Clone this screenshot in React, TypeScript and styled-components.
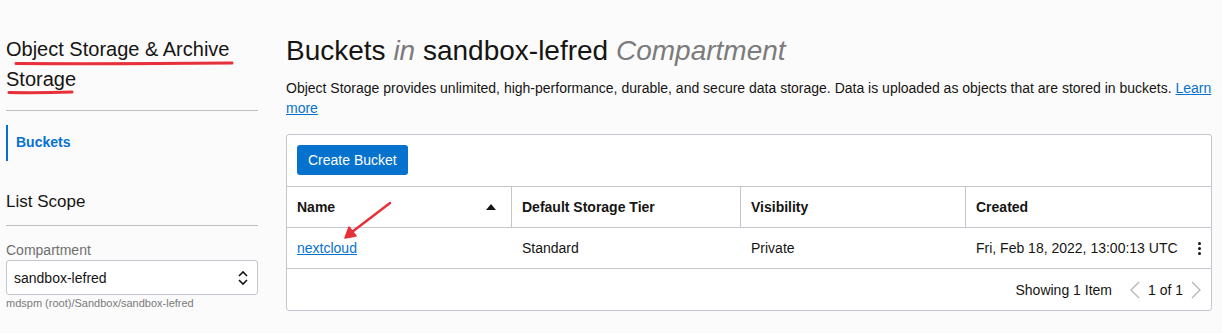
import styled, { createGlobalStyle } from "styled-components"

const GlobalStyle = createGlobalStyle`
    html, body {
        margin: 0;
        padding: 0;
        background: #fbfbfb;
        font-family: "Liberation Sans", Arial, sans-serif;
        color: #161513;
    }
`

const columns = [
    { label: "Name", width: 225, sort: true },
    { label: "Default Storage Tier", width: 229 },
    { label: "Visibility", width: 225 },
    { label: "Created", width: 0 },
]

export default function App() {
    return (
        <>
            <GlobalStyle />
            <Page>
                <Sidebar>
                    <SideTitle>Object Storage &amp; Archive Storage</SideTitle>
                    <Divider />
                    <NavItem>Buckets</NavItem>
                    <ScopeTitle>List Scope</ScopeTitle>
                    <Divider />
                    <FieldLabel>Compartment</FieldLabel>
                    <Select>
                        <span>sandbox-lefred</span>
                        <svg width="12" height="16" viewBox="0 0 12 16">
                            <path d="M2 6 L6 2 L10 6 M2 10 L6 14 L10 10" fill="none" stroke="#161513" strokeWidth="1.6" />
                        </svg>
                    </Select>
                    <Hint>mdspm (root)/Sandbox/sandbox-lefred</Hint>
                </Sidebar>
                <Main>
                    <Title>
                        Buckets <Muted>in</Muted> sandbox-lefred <Muted>Compartment</Muted>
                    </Title>
                    <Description>
                        Object Storage provides unlimited, high-performance, durable, and secure data storage. Data is uploaded as objects that are stored in buckets. <Link>Learn</Link> <Link>more</Link>
                    </Description>
                    <Card>
                        <Toolbar>
                            <PrimaryButton>Create Bucket</PrimaryButton>
                        </Toolbar>
                        <HeaderRow>
                            {columns.map((c, i) => (
                                <HeadCell key={c.label} $width={c.width} $last={i === columns.length - 1}>
                                    {c.label}
                                    {c.sort && <SortArrow />}
                                </HeadCell>
                            ))}
                        </HeaderRow>
                        <BodyRow>
                            <Cell $width={225}><Link>nextcloud</Link></Cell>
                            <Cell $width={229}>Standard</Cell>
                            <Cell $width={225}>Private</Cell>
                            <Cell $width={0}>
                                Fri, Feb 18, 2022, 13:00:13 UTC
                                <Kebab>
                                    <i /><i /><i />
                                </Kebab>
                            </Cell>
                        </BodyRow>
                        <Footer>
                            <span>Showing 1 Item</span>
                            <Pager>
                                <svg width="10" height="18" viewBox="0 0 10 18">
                                    <path d="M9 1 L1 9 L9 17" fill="none" stroke="#b5b5b5" strokeWidth="1.3" />
                                </svg>
                                <span>1 of 1</span>
                                <svg width="10" height="18" viewBox="0 0 10 18">
                                    <path d="M1 1 L9 9 L1 17" fill="none" stroke="#b5b5b5" strokeWidth="1.3" />
                                </svg>
                            </Pager>
                        </Footer>
                    </Card>
                </Main>
                <Annotations width="1222" height="333" viewBox="0 0 1222 333">
                    <path d="M16 63.5 Q120 64 232 63" stroke="#e8303a" strokeWidth="3" fill="none" strokeLinecap="round" />
                    <path d="M9 92.5 Q40 93 72 92" stroke="#e8303a" strokeWidth="3" fill="none" strokeLinecap="round" />
                    <path d="M390 203 L352 232" stroke="#e8303a" strokeWidth="2.5" fill="none" strokeLinecap="round" />
                    <path d="M345 238 L349 227 L356 236 Z" fill="#e8303a" stroke="#e8303a" strokeWidth="1.5" strokeLinejoin="round" />
                </Annotations>
            </Page>
        </>
    )
}

const Page = styled.div`
    position: relative;
    display: flex;
    width: 1222px;
    height: 333px;
    overflow: hidden;
    padding-top: 34px;
    box-sizing: border-box;
`

const Sidebar = styled.div`
    width: 252px;
    margin-left: 6px;
    flex-shrink: 0;
`

const SideTitle = styled.div`
    font-size: 20px;
    line-height: 30px;
    color: #161513;
    padding-bottom: 16px;
`

const Divider = styled.div`
    height: 1px;
    background: #bcbcbc;
`

const NavItem = styled.div`
    margin-top: 14px;
    border-left: 2px solid #0572ce;
    height: 36px;
    line-height: 34px;
    padding-left: 8px;
    font-size: 14px;
    font-weight: 700;
    color: #0572ce;
`

const ScopeTitle = styled.div`
    margin-top: 30px;
    font-size: 17px;
    line-height: 22px;
    padding-bottom: 12px;
    color: #161513;
`

const FieldLabel = styled.div`
    margin-top: 15px;
    font-size: 14px;
    line-height: 18px;
    color: #6f6f6f;
`

const Select = styled.div`
    margin-top: 1px;
    height: 35px;
    box-sizing: border-box;
    border: 1px solid #c3c6cc;
    border-radius: 3px;
    background: #ffffff;
    display: flex;
    align-items: center;
    justify-content: space-between;
    padding: 0 8px 0 7px;
    font-size: 14px;
    color: #161513;
`

const Hint = styled.div`
    margin-top: 1px;
    font-size: 11px;
    line-height: 14px;
    color: #7a7a7a;
`

const Main = styled.div`
    margin-left: 28px;
    width: 926px;
`

const Title = styled.h1`
    margin: 0;
    font-size: 28px;
    font-weight: 400;
    line-height: 34px;
    color: #161513;
`

const Muted = styled.em`
    color: #7b7b7b;
`

const Description = styled.p`
    margin: 10px -6px 0 0;
    font-size: 14px;
    line-height: 20px;
    color: #161513;
`

const Link = styled.a`
    color: #0572ce;
    text-decoration: underline;
    cursor: pointer;
`

const Card = styled.div`
    margin-top: 16px;
    border: 1px solid #c3c6cc;
    border-radius: 3px;
    background: #ffffff;
`

const Toolbar = styled.div`
    padding: 10px 10px 11px;
    height: 30px;
`

const PrimaryButton = styled.button`
    height: 30px;
    padding: 0 11px;
    border: none;
    border-radius: 3px;
    background: #0572ce;
    color: #ffffff;
    font-family: "Liberation Sans", Arial, sans-serif;
    font-size: 14px;
`

const HeaderRow = styled.div`
    display: flex;
    border-top: 1px solid #c3c6cc;
    height: 40px;
`

const HeadCell = styled.div<{ $width: number; $last?: boolean }>`
    ${p => (p.$width ? `width: ${p.$width}px;` : "flex: 1;")}
    box-sizing: border-box;
    border-right: ${p => (p.$last ? "none" : "1px solid #c3c6cc")};
    display: flex;
    align-items: center;
    justify-content: space-between;
    padding: 0 15px 0 10px;
    font-size: 14px;
    font-weight: 700;
    color: #161513;
`

const SortArrow = styled.span`
    width: 0;
    height: 0;
    border-left: 5px solid transparent;
    border-right: 5px solid transparent;
    border-bottom: 6px solid #161513;
`

const BodyRow = styled.div`
    display: flex;
    border-top: 1px solid #c3c6cc;
    height: 40px;
`

const Cell = styled.div<{ $width: number }>`
    ${p => (p.$width ? `width: ${p.$width}px;` : "flex: 1;")}
    box-sizing: border-box;
    display: flex;
    align-items: center;
    justify-content: space-between;
    padding: 0 10px;
    font-size: 14px;
    color: #161513;
`

const Kebab = styled.span`
    display: flex;
    flex-direction: column;
    gap: 2px;
    i {
        width: 3px;
        height: 3px;
        border-radius: 50%;
        background: #161513;
    }
`

const Footer = styled.div`
    border-top: 1px solid #c3c6cc;
    height: 41px;
    display: flex;
    align-items: center;
    justify-content: flex-end;
    gap: 18px;
    padding-right: 10px;
    font-size: 14px;
    color: #161513;
`

const Pager = styled.div`
    display: flex;
    align-items: center;
    gap: 8px;
`

const Annotations = styled.svg`
    position: absolute;
    left: 0;
    top: 0;
    pointer-events: none;
`
